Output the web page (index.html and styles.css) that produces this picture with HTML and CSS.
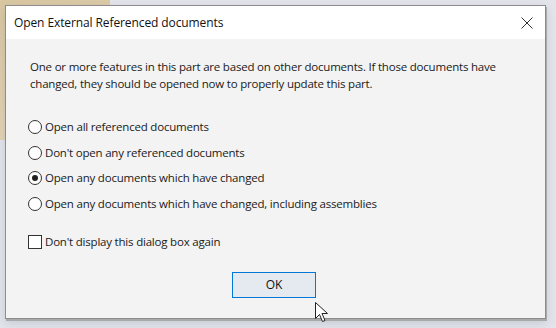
FILE: index.html
```html
<!DOCTYPE html>
<html lang="en">
<head>
  <meta charset="UTF-8">
  <title>Open External Referenced documents</title>
  <link rel="stylesheet" href="styles.css">
</head>
<body>
  <div class="desk">
      <div class="drawing"></div>
      <div class="dialog">
          <div class="titlebar">
              <span class="title">Open External Referenced documents</span>
              <svg class="close" width="12" height="12" viewBox="0 0 12 12">
                  <path d="M0.5 0.5 L11.5 11.5 M11.5 0.5 L0.5 11.5" stroke="#333" stroke-width="1" fill="none"/>
              </svg>
          </div>
          <div class="content">
              <p class="message">One or more features in this part are based on other documents. If those documents have changed, they should be opened now to properly update this part.</p>
              <div class="options">
                  <label class="option"><span class="radio"></span>Open all referenced documents</label>
                  <label class="option"><span class="radio"></span>Don't open any referenced documents</label>
                  <label class="option"><span class="radio checked"></span>Open any documents which have changed</label>
                  <label class="option"><span class="radio"></span>Open any documents which have changed, including assemblies</label>
              </div>
              <label class="option check-row"><span class="checkbox"></span>Don't display this dialog box again</label>
              <div class="buttons">
                  <button class="ok">OK</button>
              </div>
          </div>
      </div>
      <svg class="cursor" width="14" height="21" viewBox="0 0 14 21">
          <path d="M0.5 0.5 L0.5 16.5 L4.5 12.5 L7.5 19.5 L10 18.5 L7 11.5 L12.5 11.5 Z" fill="#fff" stroke="#222" stroke-width="1"/>
      </svg>
  </div>
</body>
</html>
```

FILE: styles.css
```css
body {
    margin: 0;
    padding: 0;
    font-family: 'Open Sans', 'Noto Sans', sans-serif;
    color: #1a1a1a;
}
.desk {
    position: relative;
    width: 556px;
    height: 328px;
    background: #e3e5eb;
    overflow: hidden;
    padding: 5px 0 0 5px;
    box-sizing: border-box;
}
.drawing {
    position: absolute;
    left: 0;
    top: 0;
    width: 110px;
    height: 140px;
    background: linear-gradient(160deg, #d9c7a2, #e6d8bb);
    clip-path: polygon(0 0, 100% 0, 100% 4%, 4% 100%, 0 100%);
}
.dialog {
    position: relative;
    width: 539px;
    height: 312px;
    border: 1px solid #8c8c8c;
    background: #f3f3f3;
    box-shadow: 1px 2px 0 #a9a9a9, 0 4px 10px rgba(60, 70, 90, 0.18);
}
.titlebar {
    height: 33px;
    background: #fff;
    display: flex;
    align-items: center;
    justify-content: space-between;
    padding: 0 12px 0 8px;
}
.title {
    font-size: 12px;
    letter-spacing: -0.1px;
    color: #111;
}
.close {
    display: block;
}
.content {
    padding: 19px 24px 0 24px;
    font-size: 11.5px;
    letter-spacing: -0.2px;
}
.message {
    margin: 0;
    line-height: 17px;
}
.options {
    margin-top: 28px;
    display: flex;
    flex-direction: column;
    gap: 11.67px;
}
.option {
    display: flex;
    align-items: center;
    height: 14px;
    line-height: 14px;
}
.radio {
    width: 12px;
    height: 12px;
    border: 1px solid #333;
    border-radius: 50%;
    background: #fff;
    margin-right: 3px;
    margin-left: -2px;
    position: relative;
}
.radio.checked::after {
    content: "";
    position: absolute;
    left: 3px;
    top: 3px;
    width: 6px;
    height: 6px;
    border-radius: 50%;
    background: #1f1f1f;
}
.check-row {
    margin-top: 24px;
}
.checkbox {
    width: 12px;
    height: 12px;
    border: 1px solid #333;
    background: #fff;
    margin-right: 3px;
    margin-left: -2px;
}
.buttons {
    display: flex;
    justify-content: center;
    margin-top: 23px;
}
.ok {
    width: 84px;
    height: 26px;
    border: 1px solid #0078d7;
    background: #e5eaf0;
    font-family: inherit;
    font-size: 12px;
    color: #111;
    padding: 0;
    margin-left: -3px;
}
.cursor {
    position: absolute;
    left: 315px;
    top: 302px;
}
```
